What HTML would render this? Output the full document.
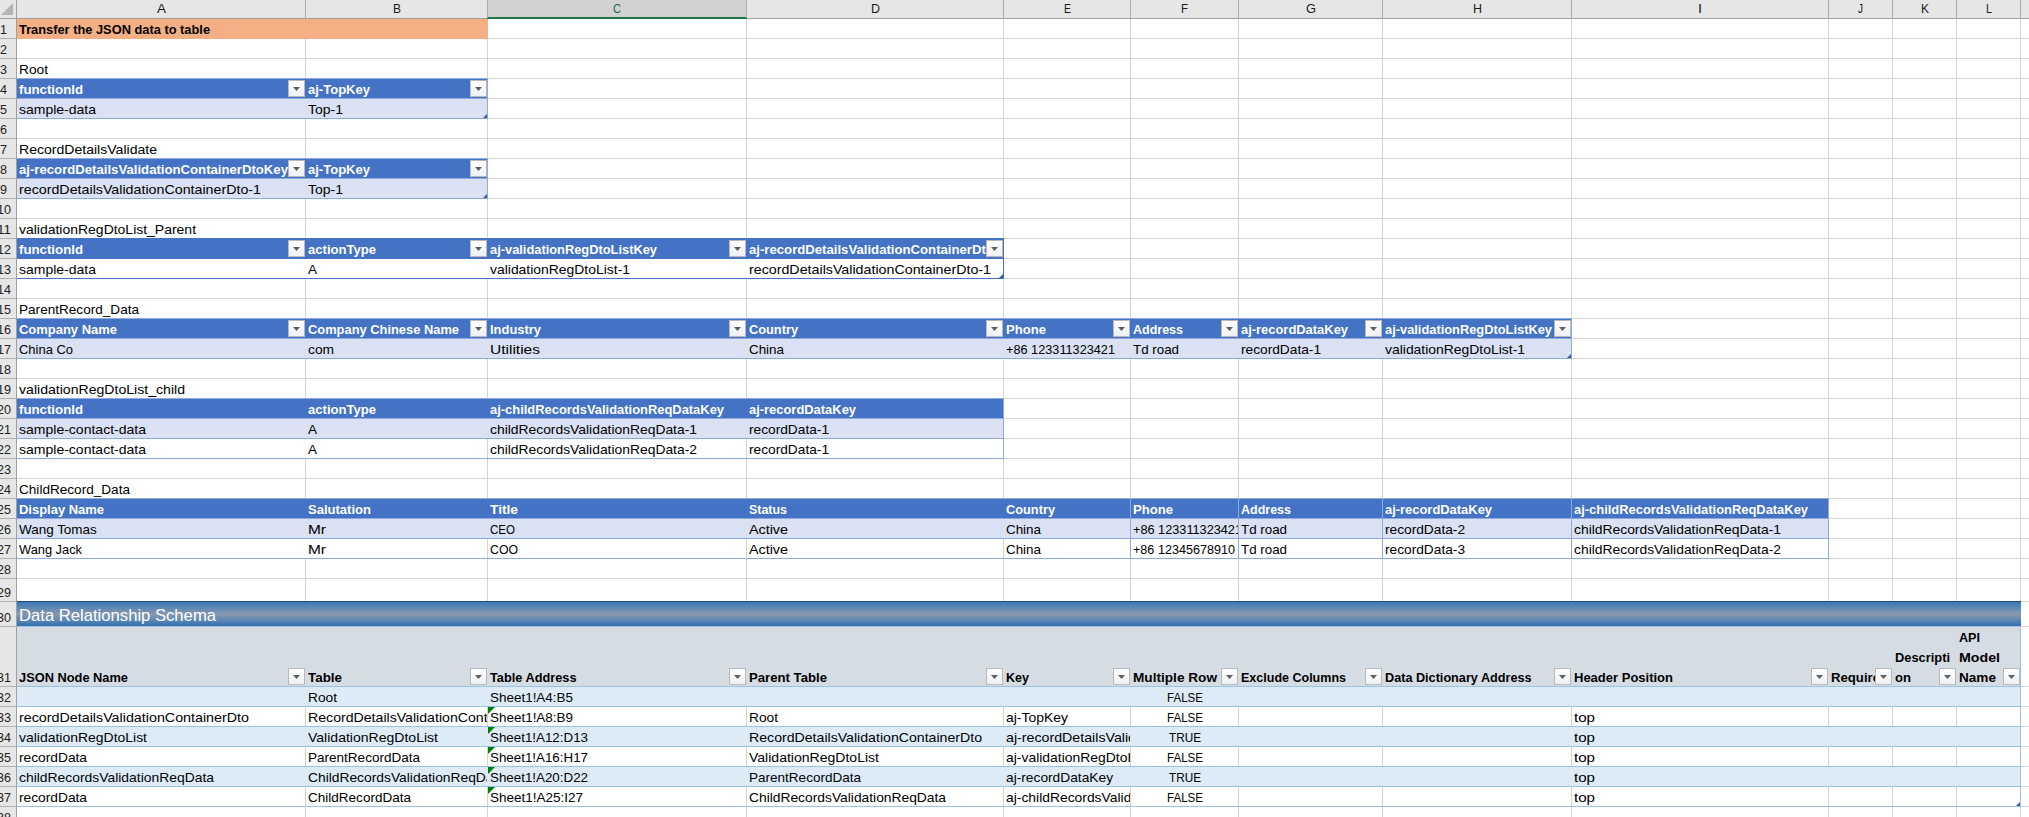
<!DOCTYPE html>
<html><head><meta charset="utf-8"><style>
html,body{margin:0;padding:0;background:#fff;}
#root{position:relative;width:2029px;height:817px;overflow:hidden;background:#fff;font-family:"Liberation Sans",sans-serif;}
#root div{position:absolute;}
.t{overflow:hidden;white-space:nowrap;}
.t span{position:absolute;top:0;transform-origin:0 0;white-space:nowrap;}
.btn{width:15px;height:15px;border:1px solid #b9b9b9;background:linear-gradient(#ffffff,#eef0f4);}
.btn i{position:absolute;left:4px;top:6px;width:0;height:0;border-left:3.5px solid transparent;border-right:3.5px solid transparent;border-top:4px solid #595959;}

</style></head><body><div id="root">
<div style="left:305px;top:19px;width:1px;height:798px;background:#d4d4d4;"></div>
<div style="left:487px;top:19px;width:1px;height:798px;background:#d4d4d4;"></div>
<div style="left:746px;top:19px;width:1px;height:798px;background:#d4d4d4;"></div>
<div style="left:1003px;top:19px;width:1px;height:798px;background:#d4d4d4;"></div>
<div style="left:1130px;top:19px;width:1px;height:798px;background:#d4d4d4;"></div>
<div style="left:1238px;top:19px;width:1px;height:798px;background:#d4d4d4;"></div>
<div style="left:1382px;top:19px;width:1px;height:798px;background:#d4d4d4;"></div>
<div style="left:1571px;top:19px;width:1px;height:798px;background:#d4d4d4;"></div>
<div style="left:1828px;top:19px;width:1px;height:798px;background:#d4d4d4;"></div>
<div style="left:1892px;top:19px;width:1px;height:798px;background:#d4d4d4;"></div>
<div style="left:1956px;top:19px;width:1px;height:798px;background:#d4d4d4;"></div>
<div style="left:2020px;top:19px;width:1px;height:798px;background:#d4d4d4;"></div>
<div style="left:17px;top:38px;width:2012px;height:1px;background:#d4d4d4;"></div>
<div style="left:17px;top:58px;width:2012px;height:1px;background:#d4d4d4;"></div>
<div style="left:17px;top:78px;width:2012px;height:1px;background:#d4d4d4;"></div>
<div style="left:17px;top:98px;width:2012px;height:1px;background:#d4d4d4;"></div>
<div style="left:17px;top:118px;width:2012px;height:1px;background:#d4d4d4;"></div>
<div style="left:17px;top:138px;width:2012px;height:1px;background:#d4d4d4;"></div>
<div style="left:17px;top:158px;width:2012px;height:1px;background:#d4d4d4;"></div>
<div style="left:17px;top:178px;width:2012px;height:1px;background:#d4d4d4;"></div>
<div style="left:17px;top:198px;width:2012px;height:1px;background:#d4d4d4;"></div>
<div style="left:17px;top:218px;width:2012px;height:1px;background:#d4d4d4;"></div>
<div style="left:17px;top:238px;width:2012px;height:1px;background:#d4d4d4;"></div>
<div style="left:17px;top:258px;width:2012px;height:1px;background:#d4d4d4;"></div>
<div style="left:17px;top:278px;width:2012px;height:1px;background:#d4d4d4;"></div>
<div style="left:17px;top:298px;width:2012px;height:1px;background:#d4d4d4;"></div>
<div style="left:17px;top:318px;width:2012px;height:1px;background:#d4d4d4;"></div>
<div style="left:17px;top:338px;width:2012px;height:1px;background:#d4d4d4;"></div>
<div style="left:17px;top:358px;width:2012px;height:1px;background:#d4d4d4;"></div>
<div style="left:17px;top:378px;width:2012px;height:1px;background:#d4d4d4;"></div>
<div style="left:17px;top:398px;width:2012px;height:1px;background:#d4d4d4;"></div>
<div style="left:17px;top:418px;width:2012px;height:1px;background:#d4d4d4;"></div>
<div style="left:17px;top:438px;width:2012px;height:1px;background:#d4d4d4;"></div>
<div style="left:17px;top:458px;width:2012px;height:1px;background:#d4d4d4;"></div>
<div style="left:17px;top:478px;width:2012px;height:1px;background:#d4d4d4;"></div>
<div style="left:17px;top:498px;width:2012px;height:1px;background:#d4d4d4;"></div>
<div style="left:17px;top:518px;width:2012px;height:1px;background:#d4d4d4;"></div>
<div style="left:17px;top:538px;width:2012px;height:1px;background:#d4d4d4;"></div>
<div style="left:17px;top:558px;width:2012px;height:1px;background:#d4d4d4;"></div>
<div style="left:17px;top:578px;width:2012px;height:1px;background:#d4d4d4;"></div>
<div style="left:17px;top:601px;width:2012px;height:1px;background:#d4d4d4;"></div>
<div style="left:17px;top:626px;width:2012px;height:1px;background:#d4d4d4;"></div>
<div style="left:17px;top:686px;width:2012px;height:1px;background:#d4d4d4;"></div>
<div style="left:17px;top:706px;width:2012px;height:1px;background:#d4d4d4;"></div>
<div style="left:17px;top:726px;width:2012px;height:1px;background:#d4d4d4;"></div>
<div style="left:17px;top:746px;width:2012px;height:1px;background:#d4d4d4;"></div>
<div style="left:17px;top:766px;width:2012px;height:1px;background:#d4d4d4;"></div>
<div style="left:17px;top:786px;width:2012px;height:1px;background:#d4d4d4;"></div>
<div style="left:17px;top:806px;width:2012px;height:1px;background:#d4d4d4;"></div>
<div style="left:17px;top:19px;width:471px;height:20px;background:#f4b084;"></div>
<div style="left:17px;top:79px;width:471px;height:20px;background:#4472c4;"></div>
<div style="left:17px;top:99px;width:471px;height:20px;background:#d9e1f2;"></div>
<div style="left:17px;top:78px;width:471px;height:1px;background:#8ea9db;"></div>
<div style="left:17px;top:98px;width:471px;height:1px;background:#8ea9db;"></div>
<div style="left:17px;top:118px;width:471px;height:1px;background:#8ea9db;"></div>
<div style="left:487px;top:78px;width:1px;height:41px;background:#8ea9db;"></div>
<div style="left:17px;top:159px;width:471px;height:20px;background:#4472c4;"></div>
<div style="left:17px;top:179px;width:471px;height:20px;background:#d9e1f2;"></div>
<div style="left:17px;top:158px;width:471px;height:1px;background:#8ea9db;"></div>
<div style="left:17px;top:178px;width:471px;height:1px;background:#8ea9db;"></div>
<div style="left:17px;top:198px;width:471px;height:1px;background:#8ea9db;"></div>
<div style="left:487px;top:158px;width:1px;height:41px;background:#8ea9db;"></div>
<div style="left:17px;top:239px;width:987px;height:20px;background:#4472c4;"></div>
<div style="left:17px;top:259px;width:987px;height:20px;background:#ffffff;"></div>
<div style="left:17px;top:238px;width:987px;height:1px;background:#4472c4;"></div>
<div style="left:17px;top:278px;width:987px;height:1px;background:#4472c4;"></div>
<div style="left:1003px;top:238px;width:1px;height:41px;background:#4472c4;"></div>
<div style="left:17px;top:319px;width:1555px;height:20px;background:#4472c4;"></div>
<div style="left:17px;top:339px;width:1555px;height:20px;background:#d9e1f2;"></div>
<div style="left:17px;top:318px;width:1555px;height:1px;background:#8ea9db;"></div>
<div style="left:17px;top:338px;width:1555px;height:1px;background:#8ea9db;"></div>
<div style="left:17px;top:358px;width:1555px;height:1px;background:#8ea9db;"></div>
<div style="left:1571px;top:318px;width:1px;height:41px;background:#8ea9db;"></div>
<div style="left:17px;top:399px;width:987px;height:20px;background:#4472c4;"></div>
<div style="left:17px;top:419px;width:987px;height:20px;background:#d9e1f2;"></div>
<div style="left:305px;top:439px;width:1px;height:19px;background:#ffffff;"></div>
<div style="left:17px;top:398px;width:987px;height:1px;background:#8ea9db;"></div>
<div style="left:17px;top:418px;width:987px;height:1px;background:#8ea9db;"></div>
<div style="left:17px;top:438px;width:987px;height:1px;background:#8ea9db;"></div>
<div style="left:17px;top:458px;width:987px;height:1px;background:#8ea9db;"></div>
<div style="left:1003px;top:398px;width:1px;height:61px;background:#8ea9db;"></div>
<div style="left:17px;top:499px;width:1812px;height:20px;background:#4472c4;"></div>
<div style="left:17px;top:519px;width:1812px;height:20px;background:#d9e1f2;"></div>
<div style="left:305px;top:539px;width:1px;height:19px;background:#ffffff;"></div>
<div style="left:17px;top:498px;width:1812px;height:1px;background:#8ea9db;"></div>
<div style="left:17px;top:518px;width:1812px;height:1px;background:#8ea9db;"></div>
<div style="left:17px;top:538px;width:1812px;height:1px;background:#8ea9db;"></div>
<div style="left:17px;top:558px;width:1812px;height:1px;background:#8ea9db;"></div>
<div style="left:1828px;top:498px;width:1px;height:61px;background:#8ea9db;"></div>
<div style="left:1130px;top:499px;width:1px;height:60px;background:#8ea9db;"></div>
<div style="left:1238px;top:499px;width:1px;height:60px;background:#8ea9db;"></div>
<div style="left:1382px;top:499px;width:1px;height:60px;background:#8ea9db;"></div>
<div style="left:1571px;top:499px;width:1px;height:60px;background:#8ea9db;"></div>
<div style="left:17px;top:601px;width:2004px;height:1px;background:#1f4e78;"></div>
<div style="left:17px;top:602px;width:2004px;height:24px;background:linear-gradient(#3a78b8,#5f88b4 25%,#8898ae 50%,#5f88b4 75%,#2e6fb2);"></div>
<div style="left:17px;top:626px;width:2004px;height:1px;background:#a9c4e0;"></div>
<div style="left:17px;top:627px;width:2004px;height:60px;background:#d6dce4;"></div>
<div style="left:17px;top:687px;width:2004px;height:20px;background:#ddebf7;"></div>
<div style="left:17px;top:727px;width:2004px;height:20px;background:#ddebf7;"></div>
<div style="left:17px;top:767px;width:2004px;height:20px;background:#ddebf7;"></div>
<div style="left:17px;top:686px;width:2004px;height:1px;background:#9bc2e6;"></div>
<div style="left:17px;top:706px;width:2004px;height:1px;background:#9bc2e6;"></div>
<div style="left:17px;top:726px;width:2004px;height:1px;background:#9bc2e6;"></div>
<div style="left:17px;top:746px;width:2004px;height:1px;background:#9bc2e6;"></div>
<div style="left:17px;top:766px;width:2004px;height:1px;background:#9bc2e6;"></div>
<div style="left:17px;top:786px;width:2004px;height:1px;background:#9bc2e6;"></div>
<div style="left:17px;top:806px;width:2004px;height:1px;background:#9bc2e6;"></div>
<div style="left:2020px;top:627px;width:1px;height:180px;background:#9bc2e6;"></div>
<div style="left:488px;top:707px;width:0;height:0;border-top:7px solid #008000;border-right:7px solid transparent"></div>
<div style="left:488px;top:727px;width:0;height:0;border-top:7px solid #008000;border-right:7px solid transparent"></div>
<div style="left:488px;top:747px;width:0;height:0;border-top:7px solid #008000;border-right:7px solid transparent"></div>
<div style="left:488px;top:767px;width:0;height:0;border-top:7px solid #008000;border-right:7px solid transparent"></div>
<div style="left:488px;top:787px;width:0;height:0;border-top:7px solid #008000;border-right:7px solid transparent"></div>
<div class="t" style="left:17px;top:21.50px;width:288px;height:16px;line-height:16px;"><span style="left:2.00px;font-size:13px;font-weight:bold;color:#000;transform:scaleX(0.9866)">Transfer the JSON data to table</span></div>
<div class="t" style="left:17px;top:61.50px;width:288px;height:16px;line-height:16px;"><span style="left:2.00px;font-size:13px;color:#000;transform:scaleX(1.0561)">Root</span></div>
<div class="t" style="left:17px;top:81.50px;width:271px;height:16px;line-height:16px;"><span style="left:2.00px;font-size:13px;font-weight:bold;color:#fff;transform:scaleX(1.0188)">functionId</span></div>
<div class="t" style="left:306px;top:81.50px;width:164px;height:16px;line-height:16px;"><span style="left:2.00px;font-size:13px;font-weight:bold;color:#fff;transform:scaleX(1.0020)">aj-TopKey</span></div>
<div class="t" style="left:17px;top:101.50px;width:288px;height:16px;line-height:16px;"><span style="left:2.00px;font-size:13px;color:#000;transform:scaleX(1.0763)">sample-data</span></div>
<div class="t" style="left:306px;top:101.50px;width:181px;height:16px;line-height:16px;"><span style="left:2.00px;font-size:13px;color:#000;transform:scaleX(1.0763)">Top-1</span></div>
<div class="t" style="left:17px;top:141.50px;width:288px;height:16px;line-height:16px;"><span style="left:2.00px;font-size:13px;color:#000;transform:scaleX(1.0810)">RecordDetailsValidate</span></div>
<div class="t" style="left:17px;top:161.50px;width:271px;height:16px;line-height:16px;"><span style="left:2.00px;font-size:13px;font-weight:bold;color:#fff;transform:scaleX(1.0119)">aj-recordDetailsValidationContainerDtoKey</span></div>
<div class="t" style="left:306px;top:161.50px;width:164px;height:16px;line-height:16px;"><span style="left:2.00px;font-size:13px;font-weight:bold;color:#fff;transform:scaleX(1.0020)">aj-TopKey</span></div>
<div class="t" style="left:17px;top:181.50px;width:288px;height:16px;line-height:16px;"><span style="left:2.00px;font-size:13px;color:#000;transform:scaleX(1.0957)">recordDetailsValidationContainerDto-1</span></div>
<div class="t" style="left:306px;top:181.50px;width:181px;height:16px;line-height:16px;"><span style="left:2.00px;font-size:13px;color:#000;transform:scaleX(1.0763)">Top-1</span></div>
<div class="t" style="left:17px;top:221.50px;width:288px;height:16px;line-height:16px;"><span style="left:2.00px;font-size:13px;color:#000;transform:scaleX(1.0743)">validationRegDtoList_Parent</span></div>
<div class="t" style="left:17px;top:241.50px;width:271px;height:16px;line-height:16px;"><span style="left:2.00px;font-size:13px;font-weight:bold;color:#fff;transform:scaleX(1.0188)">functionId</span></div>
<div class="t" style="left:306px;top:241.50px;width:164px;height:16px;line-height:16px;"><span style="left:2.00px;font-size:13px;font-weight:bold;color:#fff;transform:scaleX(1.0050)">actionType</span></div>
<div class="t" style="left:488px;top:241.50px;width:241px;height:16px;line-height:16px;"><span style="left:2.00px;font-size:13px;font-weight:bold;color:#fff;transform:scaleX(0.9880)">aj-validationRegDtoListKey</span></div>
<div class="t" style="left:747px;top:241.50px;width:239px;height:16px;line-height:16px;"><span style="left:2.00px;font-size:13px;font-weight:bold;color:#fff;transform:scaleX(1.0119)">aj-recordDetailsValidationContainerDtoKey</span></div>
<div class="t" style="left:17px;top:261.50px;width:288px;height:16px;line-height:16px;"><span style="left:2.00px;font-size:13px;color:#000;transform:scaleX(1.0763)">sample-data</span></div>
<div class="t" style="left:306px;top:261.50px;width:181px;height:16px;line-height:16px;"><span style="left:2.00px;font-size:13px;color:#000;transform:scaleX(1.0380)">A</span></div>
<div class="t" style="left:488px;top:261.50px;width:258px;height:16px;line-height:16px;"><span style="left:2.00px;font-size:13px;color:#000;transform:scaleX(1.0704)">validationRegDtoList-1</span></div>
<div class="t" style="left:747px;top:261.50px;width:256px;height:16px;line-height:16px;"><span style="left:2.00px;font-size:13px;color:#000;transform:scaleX(1.0957)">recordDetailsValidationContainerDto-1</span></div>
<div class="t" style="left:17px;top:301.50px;width:288px;height:16px;line-height:16px;"><span style="left:2.00px;font-size:13px;color:#000;transform:scaleX(1.0444)">ParentRecord_Data</span></div>
<div class="t" style="left:17px;top:321.50px;width:271px;height:16px;line-height:16px;"><span style="left:2.00px;font-size:13px;font-weight:bold;color:#fff;transform:scaleX(0.9975)">Company Name</span></div>
<div class="t" style="left:306px;top:321.50px;width:164px;height:16px;line-height:16px;"><span style="left:2.00px;font-size:13px;font-weight:bold;color:#fff;transform:scaleX(0.9906)">Company Chinese Name</span></div>
<div class="t" style="left:488px;top:321.50px;width:241px;height:16px;line-height:16px;"><span style="left:2.00px;font-size:13px;font-weight:bold;color:#fff;transform:scaleX(0.9945)">Industry</span></div>
<div class="t" style="left:747px;top:321.50px;width:239px;height:16px;line-height:16px;"><span style="left:2.00px;font-size:13px;font-weight:bold;color:#fff;transform:scaleX(0.9834)">Country</span></div>
<div class="t" style="left:1004px;top:321.50px;width:109px;height:16px;line-height:16px;"><span style="left:2.00px;font-size:13px;font-weight:bold;color:#fff;transform:scaleX(1.0070)">Phone</span></div>
<div class="t" style="left:1131px;top:321.50px;width:90px;height:16px;line-height:16px;"><span style="left:2.00px;font-size:13px;font-weight:bold;color:#fff;transform:scaleX(0.9612)">Address</span></div>
<div class="t" style="left:1239px;top:321.50px;width:126px;height:16px;line-height:16px;"><span style="left:2.00px;font-size:13px;font-weight:bold;color:#fff;transform:scaleX(0.9939)">aj-recordDataKey</span></div>
<div class="t" style="left:1383px;top:321.50px;width:171px;height:16px;line-height:16px;"><span style="left:2.00px;font-size:13px;font-weight:bold;color:#fff;transform:scaleX(0.9880)">aj-validationRegDtoListKey</span></div>
<div class="t" style="left:17px;top:341.50px;width:288px;height:16px;line-height:16px;"><span style="left:2.00px;font-size:13px;color:#000;transform:scaleX(0.9964)">China Co</span></div>
<div class="t" style="left:306px;top:341.50px;width:181px;height:16px;line-height:16px;"><span style="left:2.00px;font-size:13px;color:#000;transform:scaleX(1.0587)">com</span></div>
<div class="t" style="left:488px;top:341.50px;width:258px;height:16px;line-height:16px;"><span style="left:2.00px;font-size:13px;color:#000;transform:scaleX(1.1935)">Utilities</span></div>
<div class="t" style="left:747px;top:341.50px;width:256px;height:16px;line-height:16px;"><span style="left:2.00px;font-size:13px;color:#000;transform:scaleX(1.0304)">China</span></div>
<div class="t" style="left:1004px;top:341.50px;width:126px;height:16px;line-height:16px;"><span style="left:2.00px;font-size:13px;color:#000;transform:scaleX(0.9779)">+86 123311323421</span></div>
<div class="t" style="left:1131px;top:341.50px;width:107px;height:16px;line-height:16px;"><span style="left:2.00px;font-size:13px;color:#000;transform:scaleX(1.0267)">Td road</span></div>
<div class="t" style="left:1239px;top:341.50px;width:143px;height:16px;line-height:16px;"><span style="left:2.00px;font-size:13px;color:#000;transform:scaleX(1.0545)">recordData-1</span></div>
<div class="t" style="left:1383px;top:341.50px;width:188px;height:16px;line-height:16px;"><span style="left:2.00px;font-size:13px;color:#000;transform:scaleX(1.0704)">validationRegDtoList-1</span></div>
<div class="t" style="left:17px;top:381.50px;width:288px;height:16px;line-height:16px;"><span style="left:2.00px;font-size:13px;color:#000;transform:scaleX(1.0835)">validationRegDtoList_child</span></div>
<div class="t" style="left:17px;top:401.50px;width:288px;height:16px;line-height:16px;"><span style="left:2.00px;font-size:13px;font-weight:bold;color:#fff;transform:scaleX(1.0188)">functionId</span></div>
<div class="t" style="left:306px;top:401.50px;width:181px;height:16px;line-height:16px;"><span style="left:2.00px;font-size:13px;font-weight:bold;color:#fff;transform:scaleX(1.0050)">actionType</span></div>
<div class="t" style="left:488px;top:401.50px;width:258px;height:16px;line-height:16px;"><span style="left:2.00px;font-size:13px;font-weight:bold;color:#fff;transform:scaleX(0.9936)">aj-childRecordsValidationReqDataKey</span></div>
<div class="t" style="left:747px;top:401.50px;width:256px;height:16px;line-height:16px;"><span style="left:2.00px;font-size:13px;font-weight:bold;color:#fff;transform:scaleX(0.9939)">aj-recordDataKey</span></div>
<div class="t" style="left:17px;top:421.50px;width:288px;height:16px;line-height:16px;"><span style="left:2.00px;font-size:13px;color:#000;transform:scaleX(1.0783)">sample-contact-data</span></div>
<div class="t" style="left:306px;top:421.50px;width:181px;height:16px;line-height:16px;"><span style="left:2.00px;font-size:13px;color:#000;transform:scaleX(1.0380)">A</span></div>
<div class="t" style="left:488px;top:421.50px;width:258px;height:16px;line-height:16px;"><span style="left:2.00px;font-size:13px;color:#000;transform:scaleX(1.0662)">childRecordsValidationReqData-1</span></div>
<div class="t" style="left:747px;top:421.50px;width:256px;height:16px;line-height:16px;"><span style="left:2.00px;font-size:13px;color:#000;transform:scaleX(1.0545)">recordData-1</span></div>
<div class="t" style="left:17px;top:441.50px;width:288px;height:16px;line-height:16px;"><span style="left:2.00px;font-size:13px;color:#000;transform:scaleX(1.0783)">sample-contact-data</span></div>
<div class="t" style="left:306px;top:441.50px;width:181px;height:16px;line-height:16px;"><span style="left:2.00px;font-size:13px;color:#000;transform:scaleX(1.0380)">A</span></div>
<div class="t" style="left:488px;top:441.50px;width:258px;height:16px;line-height:16px;"><span style="left:2.00px;font-size:13px;color:#000;transform:scaleX(1.0662)">childRecordsValidationReqData-2</span></div>
<div class="t" style="left:747px;top:441.50px;width:256px;height:16px;line-height:16px;"><span style="left:2.00px;font-size:13px;color:#000;transform:scaleX(1.0545)">recordData-1</span></div>
<div class="t" style="left:17px;top:481.50px;width:288px;height:16px;line-height:16px;"><span style="left:2.00px;font-size:13px;color:#000;transform:scaleX(1.0450)">ChildRecord_Data</span></div>
<div class="t" style="left:17px;top:501.50px;width:288px;height:16px;line-height:16px;"><span style="left:2.00px;font-size:13px;font-weight:bold;color:#fff;transform:scaleX(0.9969)">Display Name</span></div>
<div class="t" style="left:306px;top:501.50px;width:181px;height:16px;line-height:16px;"><span style="left:2.00px;font-size:13px;font-weight:bold;color:#fff;transform:scaleX(1.0026)">Salutation</span></div>
<div class="t" style="left:488px;top:501.50px;width:258px;height:16px;line-height:16px;"><span style="left:2.00px;font-size:13px;font-weight:bold;color:#fff;transform:scaleX(1.0571)">Title</span></div>
<div class="t" style="left:747px;top:501.50px;width:256px;height:16px;line-height:16px;"><span style="left:2.00px;font-size:13px;font-weight:bold;color:#fff;transform:scaleX(0.9565)">Status</span></div>
<div class="t" style="left:1004px;top:501.50px;width:126px;height:16px;line-height:16px;"><span style="left:2.00px;font-size:13px;font-weight:bold;color:#fff;transform:scaleX(0.9834)">Country</span></div>
<div class="t" style="left:1131px;top:501.50px;width:107px;height:16px;line-height:16px;"><span style="left:2.00px;font-size:13px;font-weight:bold;color:#fff;transform:scaleX(1.0070)">Phone</span></div>
<div class="t" style="left:1239px;top:501.50px;width:143px;height:16px;line-height:16px;"><span style="left:2.00px;font-size:13px;font-weight:bold;color:#fff;transform:scaleX(0.9612)">Address</span></div>
<div class="t" style="left:1383px;top:501.50px;width:188px;height:16px;line-height:16px;"><span style="left:2.00px;font-size:13px;font-weight:bold;color:#fff;transform:scaleX(0.9939)">aj-recordDataKey</span></div>
<div class="t" style="left:1572px;top:501.50px;width:256px;height:16px;line-height:16px;"><span style="left:2.00px;font-size:13px;font-weight:bold;color:#fff;transform:scaleX(0.9936)">aj-childRecordsValidationReqDataKey</span></div>
<div class="t" style="left:17px;top:521.50px;width:288px;height:16px;line-height:16px;"><span style="left:2.00px;font-size:13px;color:#000;transform:scaleX(1.0348)">Wang Tomas</span></div>
<div class="t" style="left:306px;top:521.50px;width:181px;height:16px;line-height:16px;"><span style="left:2.00px;font-size:13px;color:#000;transform:scaleX(1.1875)">Mr</span></div>
<div class="t" style="left:488px;top:521.50px;width:258px;height:16px;line-height:16px;"><span style="left:2.00px;font-size:13px;color:#000;transform:scaleX(0.8874)">CEO</span></div>
<div class="t" style="left:747px;top:521.50px;width:256px;height:16px;line-height:16px;"><span style="left:2.00px;font-size:13px;color:#000;transform:scaleX(1.1017)">Active</span></div>
<div class="t" style="left:1004px;top:521.50px;width:126px;height:16px;line-height:16px;"><span style="left:2.00px;font-size:13px;color:#000;transform:scaleX(1.0304)">China</span></div>
<div class="t" style="left:1131px;top:521.50px;width:107px;height:16px;line-height:16px;"><span style="left:2.00px;font-size:13px;color:#000;transform:scaleX(0.9779)">+86 123311323421</span></div>
<div class="t" style="left:1239px;top:521.50px;width:143px;height:16px;line-height:16px;"><span style="left:2.00px;font-size:13px;color:#000;transform:scaleX(1.0267)">Td road</span></div>
<div class="t" style="left:1383px;top:521.50px;width:188px;height:16px;line-height:16px;"><span style="left:2.00px;font-size:13px;color:#000;transform:scaleX(1.0545)">recordData-2</span></div>
<div class="t" style="left:1572px;top:521.50px;width:256px;height:16px;line-height:16px;"><span style="left:2.00px;font-size:13px;color:#000;transform:scaleX(1.0662)">childRecordsValidationReqData-1</span></div>
<div class="t" style="left:17px;top:541.50px;width:288px;height:16px;line-height:16px;"><span style="left:2.00px;font-size:13px;color:#000;transform:scaleX(0.9872)">Wang Jack</span></div>
<div class="t" style="left:306px;top:541.50px;width:181px;height:16px;line-height:16px;"><span style="left:2.00px;font-size:13px;color:#000;transform:scaleX(1.1875)">Mr</span></div>
<div class="t" style="left:488px;top:541.50px;width:258px;height:16px;line-height:16px;"><span style="left:2.00px;font-size:13px;color:#000;transform:scaleX(0.9456)">COO</span></div>
<div class="t" style="left:747px;top:541.50px;width:256px;height:16px;line-height:16px;"><span style="left:2.00px;font-size:13px;color:#000;transform:scaleX(1.1017)">Active</span></div>
<div class="t" style="left:1004px;top:541.50px;width:126px;height:16px;line-height:16px;"><span style="left:2.00px;font-size:13px;color:#000;transform:scaleX(1.0304)">China</span></div>
<div class="t" style="left:1131px;top:541.50px;width:107px;height:16px;line-height:16px;"><span style="left:2.00px;font-size:13px;color:#000;transform:scaleX(0.9696)">+86 12345678910</span></div>
<div class="t" style="left:1239px;top:541.50px;width:143px;height:16px;line-height:16px;"><span style="left:2.00px;font-size:13px;color:#000;transform:scaleX(1.0267)">Td road</span></div>
<div class="t" style="left:1383px;top:541.50px;width:188px;height:16px;line-height:16px;"><span style="left:2.00px;font-size:13px;color:#000;transform:scaleX(1.0545)">recordData-3</span></div>
<div class="t" style="left:1572px;top:541.50px;width:256px;height:16px;line-height:16px;"><span style="left:2.00px;font-size:13px;color:#000;transform:scaleX(1.0662)">childRecordsValidationReqData-2</span></div>
<div class="t" style="left:17px;top:605.61px;width:288px;height:20px;line-height:20px;"><span style="left:2.00px;font-size:17px;color:#fff;transform:scaleX(0.9787)">Data Relationship Schema</span></div>
<div class="t" style="left:17px;top:669.50px;width:271px;height:16px;line-height:16px;"><span style="left:2.00px;font-size:13px;font-weight:bold;color:#000;transform:scaleX(0.9861)">JSON Node Name</span></div>
<div class="t" style="left:306px;top:669.50px;width:164px;height:16px;line-height:16px;"><span style="left:2.00px;font-size:13px;font-weight:bold;color:#000;transform:scaleX(1.0307)">Table</span></div>
<div class="t" style="left:488px;top:669.50px;width:241px;height:16px;line-height:16px;"><span style="left:2.00px;font-size:13px;font-weight:bold;color:#000;transform:scaleX(0.9817)">Table Address</span></div>
<div class="t" style="left:747px;top:669.50px;width:239px;height:16px;line-height:16px;"><span style="left:2.00px;font-size:13px;font-weight:bold;color:#000;transform:scaleX(1.0122)">Parent Table</span></div>
<div class="t" style="left:1004px;top:669.50px;width:109px;height:16px;line-height:16px;"><span style="left:2.00px;font-size:13px;font-weight:bold;color:#000;transform:scaleX(0.9644)">Key</span></div>
<div class="t" style="left:1131px;top:669.50px;width:90px;height:16px;line-height:16px;"><span style="left:2.00px;font-size:13px;font-weight:bold;color:#000;transform:scaleX(1.0479)">Multiple Row</span></div>
<div class="t" style="left:1239px;top:669.50px;width:126px;height:16px;line-height:16px;"><span style="left:2.00px;font-size:13px;font-weight:bold;color:#000;transform:scaleX(0.9626)">Exclude Columns</span></div>
<div class="t" style="left:1383px;top:669.50px;width:171px;height:16px;line-height:16px;"><span style="left:2.00px;font-size:13px;font-weight:bold;color:#000;transform:scaleX(0.9736)">Data Dictionary Address</span></div>
<div class="t" style="left:1572px;top:669.50px;width:239px;height:16px;line-height:16px;"><span style="left:2.00px;font-size:13px;font-weight:bold;color:#000;transform:scaleX(1.0003)">Header Position</span></div>
<div class="t" style="left:1829px;top:669.50px;width:46px;height:16px;line-height:16px;"><span style="left:2.00px;font-size:13px;font-weight:bold;color:#000;transform:scaleX(1.0117)">Required</span></div>
<div class="t" style="left:1893px;top:649.50px;width:62px;height:16px;line-height:16px;"><span style="left:2.00px;font-size:13px;font-weight:bold;color:#000;transform:scaleX(0.9887)">Descripti</span></div>
<div class="t" style="left:1893px;top:669.50px;width:46px;height:16px;line-height:16px;"><span style="left:2.00px;font-size:13px;font-weight:bold;color:#000;transform:scaleX(1.0074)">on</span></div>
<div class="t" style="left:1957px;top:629.50px;width:63px;height:16px;line-height:16px;"><span style="left:2.00px;font-size:13px;font-weight:bold;color:#000;transform:scaleX(0.9690)">API</span></div>
<div class="t" style="left:1957px;top:649.50px;width:63px;height:16px;line-height:16px;"><span style="left:2.00px;font-size:13px;font-weight:bold;color:#000;transform:scaleX(1.0918)">Model</span></div>
<div class="t" style="left:1957px;top:669.50px;width:46px;height:16px;line-height:16px;"><span style="left:2.00px;font-size:13px;font-weight:bold;color:#000;transform:scaleX(1.0450)">Name</span></div>
<div class="t" style="left:306px;top:689.50px;width:181px;height:16px;line-height:16px;"><span style="left:2.00px;font-size:13px;color:#000;transform:scaleX(1.0561)">Root</span></div>
<div class="t" style="left:488px;top:689.50px;width:258px;height:16px;line-height:16px;"><span style="left:2.00px;font-size:13px;color:#000;transform:scaleX(1.0346)">Sheet1!A4:B5</span></div>
<div class="t" style="left:1131px;top:689.50px;width:107px;height:16px;line-height:16px;"><span style="left:35.50px;font-size:13px;color:#000;transform:scaleX(0.8896)">FALSE</span></div>
<div class="t" style="left:17px;top:709.50px;width:288px;height:16px;line-height:16px;"><span style="left:2.00px;font-size:13px;color:#000;transform:scaleX(1.0988)">recordDetailsValidationContainerDto</span></div>
<div class="t" style="left:306px;top:709.50px;width:181px;height:16px;line-height:16px;"><span style="left:2.00px;font-size:13px;color:#000;transform:scaleX(1.0869)">RecordDetailsValidationContainerDto</span></div>
<div class="t" style="left:488px;top:709.50px;width:258px;height:16px;line-height:16px;"><span style="left:2.00px;font-size:13px;color:#000;transform:scaleX(1.0346)">Sheet1!A8:B9</span></div>
<div class="t" style="left:747px;top:709.50px;width:256px;height:16px;line-height:16px;"><span style="left:2.00px;font-size:13px;color:#000;transform:scaleX(1.0561)">Root</span></div>
<div class="t" style="left:1004px;top:709.50px;width:126px;height:16px;line-height:16px;"><span style="left:2.00px;font-size:13px;color:#000;transform:scaleX(1.0725)">aj-TopKey</span></div>
<div class="t" style="left:1131px;top:709.50px;width:107px;height:16px;line-height:16px;"><span style="left:35.50px;font-size:13px;color:#000;transform:scaleX(0.8896)">FALSE</span></div>
<div class="t" style="left:1572px;top:709.50px;width:256px;height:16px;line-height:16px;"><span style="left:2.00px;font-size:13px;color:#000;transform:scaleX(1.1620)">top</span></div>
<div class="t" style="left:17px;top:729.50px;width:288px;height:16px;line-height:16px;"><span style="left:2.00px;font-size:13px;color:#000;transform:scaleX(1.0735)">validationRegDtoList</span></div>
<div class="t" style="left:306px;top:729.50px;width:181px;height:16px;line-height:16px;"><span style="left:2.00px;font-size:13px;color:#000;transform:scaleX(1.0794)">ValidationRegDtoList</span></div>
<div class="t" style="left:488px;top:729.50px;width:258px;height:16px;line-height:16px;"><span style="left:2.00px;font-size:13px;color:#000;transform:scaleX(1.0272)">Sheet1!A12:D13</span></div>
<div class="t" style="left:747px;top:729.50px;width:256px;height:16px;line-height:16px;"><span style="left:2.00px;font-size:13px;color:#000;transform:scaleX(1.0869)">RecordDetailsValidationContainerDto</span></div>
<div class="t" style="left:1004px;top:729.50px;width:126px;height:16px;line-height:16px;"><span style="left:2.00px;font-size:13px;color:#000;transform:scaleX(1.0928)">aj-recordDetailsValidationContainerDtoKey</span></div>
<div class="t" style="left:1131px;top:729.50px;width:107px;height:16px;line-height:16px;"><span style="left:37.50px;font-size:13px;color:#000;transform:scaleX(0.9043)">TRUE</span></div>
<div class="t" style="left:1572px;top:729.50px;width:256px;height:16px;line-height:16px;"><span style="left:2.00px;font-size:13px;color:#000;transform:scaleX(1.1620)">top</span></div>
<div class="t" style="left:17px;top:749.50px;width:288px;height:16px;line-height:16px;"><span style="left:2.00px;font-size:13px;color:#000;transform:scaleX(1.0574)">recordData</span></div>
<div class="t" style="left:306px;top:749.50px;width:181px;height:16px;line-height:16px;"><span style="left:2.00px;font-size:13px;color:#000;transform:scaleX(1.0402)">ParentRecordData</span></div>
<div class="t" style="left:488px;top:749.50px;width:258px;height:16px;line-height:16px;"><span style="left:2.00px;font-size:13px;color:#000;transform:scaleX(1.0272)">Sheet1!A16:H17</span></div>
<div class="t" style="left:747px;top:749.50px;width:256px;height:16px;line-height:16px;"><span style="left:2.00px;font-size:13px;color:#000;transform:scaleX(1.0794)">ValidationRegDtoList</span></div>
<div class="t" style="left:1004px;top:749.50px;width:126px;height:16px;line-height:16px;"><span style="left:2.00px;font-size:13px;color:#000;transform:scaleX(1.0699)">aj-validationRegDtoListKey</span></div>
<div class="t" style="left:1131px;top:749.50px;width:107px;height:16px;line-height:16px;"><span style="left:35.50px;font-size:13px;color:#000;transform:scaleX(0.8896)">FALSE</span></div>
<div class="t" style="left:1572px;top:749.50px;width:256px;height:16px;line-height:16px;"><span style="left:2.00px;font-size:13px;color:#000;transform:scaleX(1.1620)">top</span></div>
<div class="t" style="left:17px;top:769.50px;width:288px;height:16px;line-height:16px;"><span style="left:2.00px;font-size:13px;color:#000;transform:scaleX(1.0680)">childRecordsValidationReqData</span></div>
<div class="t" style="left:306px;top:769.50px;width:181px;height:16px;line-height:16px;"><span style="left:2.00px;font-size:13px;color:#000;transform:scaleX(1.0622)">ChildRecordsValidationReqData</span></div>
<div class="t" style="left:488px;top:769.50px;width:258px;height:16px;line-height:16px;"><span style="left:2.00px;font-size:13px;color:#000;transform:scaleX(1.0272)">Sheet1!A20:D22</span></div>
<div class="t" style="left:747px;top:769.50px;width:256px;height:16px;line-height:16px;"><span style="left:2.00px;font-size:13px;color:#000;transform:scaleX(1.0402)">ParentRecordData</span></div>
<div class="t" style="left:1004px;top:769.50px;width:126px;height:16px;line-height:16px;"><span style="left:2.00px;font-size:13px;color:#000;transform:scaleX(1.0578)">aj-recordDataKey</span></div>
<div class="t" style="left:1131px;top:769.50px;width:107px;height:16px;line-height:16px;"><span style="left:37.50px;font-size:13px;color:#000;transform:scaleX(0.9043)">TRUE</span></div>
<div class="t" style="left:1572px;top:769.50px;width:256px;height:16px;line-height:16px;"><span style="left:2.00px;font-size:13px;color:#000;transform:scaleX(1.1620)">top</span></div>
<div class="t" style="left:17px;top:789.50px;width:288px;height:16px;line-height:16px;"><span style="left:2.00px;font-size:13px;color:#000;transform:scaleX(1.0574)">recordData</span></div>
<div class="t" style="left:306px;top:789.50px;width:181px;height:16px;line-height:16px;"><span style="left:2.00px;font-size:13px;color:#000;transform:scaleX(1.0405)">ChildRecordData</span></div>
<div class="t" style="left:488px;top:789.50px;width:258px;height:16px;line-height:16px;"><span style="left:2.00px;font-size:13px;color:#000;transform:scaleX(1.0376)">Sheet1!A25:I27</span></div>
<div class="t" style="left:747px;top:789.50px;width:256px;height:16px;line-height:16px;"><span style="left:2.00px;font-size:13px;color:#000;transform:scaleX(1.0622)">ChildRecordsValidationReqData</span></div>
<div class="t" style="left:1004px;top:789.50px;width:126px;height:16px;line-height:16px;"><span style="left:2.00px;font-size:13px;color:#000;transform:scaleX(1.0664)">aj-childRecordsValidationReqDataKey</span></div>
<div class="t" style="left:1131px;top:789.50px;width:107px;height:16px;line-height:16px;"><span style="left:35.50px;font-size:13px;color:#000;transform:scaleX(0.8896)">FALSE</span></div>
<div class="t" style="left:1572px;top:789.50px;width:256px;height:16px;line-height:16px;"><span style="left:2.00px;font-size:13px;color:#000;transform:scaleX(1.1620)">top</span></div>
<div class="btn" style="left:288px;top:80px"><svg width="7" height="4" style="position:absolute;left:4px;top:6px"><polygon points="0,0 7,0 3.5,4" fill="#5f5f5f"/></svg></div>
<div class="btn" style="left:470px;top:80px"><svg width="7" height="4" style="position:absolute;left:4px;top:6px"><polygon points="0,0 7,0 3.5,4" fill="#5f5f5f"/></svg></div>
<div class="btn" style="left:288px;top:160px"><svg width="7" height="4" style="position:absolute;left:4px;top:6px"><polygon points="0,0 7,0 3.5,4" fill="#5f5f5f"/></svg></div>
<div class="btn" style="left:470px;top:160px"><svg width="7" height="4" style="position:absolute;left:4px;top:6px"><polygon points="0,0 7,0 3.5,4" fill="#5f5f5f"/></svg></div>
<div class="btn" style="left:288px;top:240px"><svg width="7" height="4" style="position:absolute;left:4px;top:6px"><polygon points="0,0 7,0 3.5,4" fill="#5f5f5f"/></svg></div>
<div class="btn" style="left:470px;top:240px"><svg width="7" height="4" style="position:absolute;left:4px;top:6px"><polygon points="0,0 7,0 3.5,4" fill="#5f5f5f"/></svg></div>
<div class="btn" style="left:729px;top:240px"><svg width="7" height="4" style="position:absolute;left:4px;top:6px"><polygon points="0,0 7,0 3.5,4" fill="#5f5f5f"/></svg></div>
<div class="btn" style="left:986px;top:240px"><svg width="7" height="4" style="position:absolute;left:4px;top:6px"><polygon points="0,0 7,0 3.5,4" fill="#5f5f5f"/></svg></div>
<div class="btn" style="left:288px;top:320px"><svg width="7" height="4" style="position:absolute;left:4px;top:6px"><polygon points="0,0 7,0 3.5,4" fill="#5f5f5f"/></svg></div>
<div class="btn" style="left:470px;top:320px"><svg width="7" height="4" style="position:absolute;left:4px;top:6px"><polygon points="0,0 7,0 3.5,4" fill="#5f5f5f"/></svg></div>
<div class="btn" style="left:729px;top:320px"><svg width="7" height="4" style="position:absolute;left:4px;top:6px"><polygon points="0,0 7,0 3.5,4" fill="#5f5f5f"/></svg></div>
<div class="btn" style="left:986px;top:320px"><svg width="7" height="4" style="position:absolute;left:4px;top:6px"><polygon points="0,0 7,0 3.5,4" fill="#5f5f5f"/></svg></div>
<div class="btn" style="left:1113px;top:320px"><svg width="7" height="4" style="position:absolute;left:4px;top:6px"><polygon points="0,0 7,0 3.5,4" fill="#5f5f5f"/></svg></div>
<div class="btn" style="left:1221px;top:320px"><svg width="7" height="4" style="position:absolute;left:4px;top:6px"><polygon points="0,0 7,0 3.5,4" fill="#5f5f5f"/></svg></div>
<div class="btn" style="left:1365px;top:320px"><svg width="7" height="4" style="position:absolute;left:4px;top:6px"><polygon points="0,0 7,0 3.5,4" fill="#5f5f5f"/></svg></div>
<div class="btn" style="left:1554px;top:320px"><svg width="7" height="4" style="position:absolute;left:4px;top:6px"><polygon points="0,0 7,0 3.5,4" fill="#5f5f5f"/></svg></div>
<div class="btn" style="left:288px;top:668px"><svg width="7" height="4" style="position:absolute;left:4px;top:6px"><polygon points="0,0 7,0 3.5,4" fill="#5f5f5f"/></svg></div>
<div class="btn" style="left:470px;top:668px"><svg width="7" height="4" style="position:absolute;left:4px;top:6px"><polygon points="0,0 7,0 3.5,4" fill="#5f5f5f"/></svg></div>
<div class="btn" style="left:729px;top:668px"><svg width="7" height="4" style="position:absolute;left:4px;top:6px"><polygon points="0,0 7,0 3.5,4" fill="#5f5f5f"/></svg></div>
<div class="btn" style="left:986px;top:668px"><svg width="7" height="4" style="position:absolute;left:4px;top:6px"><polygon points="0,0 7,0 3.5,4" fill="#5f5f5f"/></svg></div>
<div class="btn" style="left:1113px;top:668px"><svg width="7" height="4" style="position:absolute;left:4px;top:6px"><polygon points="0,0 7,0 3.5,4" fill="#5f5f5f"/></svg></div>
<div class="btn" style="left:1221px;top:668px"><svg width="7" height="4" style="position:absolute;left:4px;top:6px"><polygon points="0,0 7,0 3.5,4" fill="#5f5f5f"/></svg></div>
<div class="btn" style="left:1365px;top:668px"><svg width="7" height="4" style="position:absolute;left:4px;top:6px"><polygon points="0,0 7,0 3.5,4" fill="#5f5f5f"/></svg></div>
<div class="btn" style="left:1554px;top:668px"><svg width="7" height="4" style="position:absolute;left:4px;top:6px"><polygon points="0,0 7,0 3.5,4" fill="#5f5f5f"/></svg></div>
<div class="btn" style="left:1811px;top:668px"><svg width="7" height="4" style="position:absolute;left:4px;top:6px"><polygon points="0,0 7,0 3.5,4" fill="#5f5f5f"/></svg></div>
<div class="btn" style="left:1875px;top:668px"><svg width="7" height="4" style="position:absolute;left:4px;top:6px"><polygon points="0,0 7,0 3.5,4" fill="#5f5f5f"/></svg></div>
<div class="btn" style="left:1939px;top:668px"><svg width="7" height="4" style="position:absolute;left:4px;top:6px"><polygon points="0,0 7,0 3.5,4" fill="#5f5f5f"/></svg></div>
<div class="btn" style="left:2003px;top:668px"><svg width="7" height="4" style="position:absolute;left:4px;top:6px"><polygon points="0,0 7,0 3.5,4" fill="#5f5f5f"/></svg></div>
<div style="left:483px;top:114px;width:0;height:0;border-bottom:4px solid #3a56a8;border-left:4px solid transparent"></div>
<div style="left:483px;top:194px;width:0;height:0;border-bottom:4px solid #3a56a8;border-left:4px solid transparent"></div>
<div style="left:999px;top:274px;width:0;height:0;border-bottom:4px solid #3a56a8;border-left:4px solid transparent"></div>
<div style="left:1567px;top:354px;width:0;height:0;border-bottom:4px solid #3a56a8;border-left:4px solid transparent"></div>
<div style="left:2016px;top:802px;width:0;height:0;border-bottom:4px solid #3a56a8;border-left:4px solid transparent"></div>
<div style="left:0;top:0;width:2029px;height:18px;background:#e6e6e6"></div>
<div style="left:488px;top:0;width:258px;height:17px;background:#d2d2d2"></div>
<div style="left:0;top:18px;width:2029px;height:1px;background:#a0a0a0"></div>
<div style="left:487px;top:17px;width:260px;height:2px;background:#217346"></div>
<div style="left:0;top:19px;width:16px;height:798px;background:#e6e6e6"></div>
<div style="left:16px;top:0;width:1px;height:817px;background:#a0a0a0"></div>
<div style="left:305px;top:0;width:1px;height:18px;background:#ababab"></div>
<div style="left:487px;top:0;width:1px;height:18px;background:#ababab"></div>
<div style="left:746px;top:0;width:1px;height:18px;background:#ababab"></div>
<div style="left:1003px;top:0;width:1px;height:18px;background:#ababab"></div>
<div style="left:1130px;top:0;width:1px;height:18px;background:#ababab"></div>
<div style="left:1238px;top:0;width:1px;height:18px;background:#ababab"></div>
<div style="left:1382px;top:0;width:1px;height:18px;background:#ababab"></div>
<div style="left:1571px;top:0;width:1px;height:18px;background:#ababab"></div>
<div style="left:1828px;top:0;width:1px;height:18px;background:#ababab"></div>
<div style="left:1892px;top:0;width:1px;height:18px;background:#ababab"></div>
<div style="left:1956px;top:0;width:1px;height:18px;background:#ababab"></div>
<div style="left:2020px;top:0;width:1px;height:18px;background:#ababab"></div>
<div style="left:0;top:38px;width:16px;height:1px;background:#b0b0b0"></div>
<div style="left:0;top:58px;width:16px;height:1px;background:#b0b0b0"></div>
<div style="left:0;top:78px;width:16px;height:1px;background:#b0b0b0"></div>
<div style="left:0;top:98px;width:16px;height:1px;background:#b0b0b0"></div>
<div style="left:0;top:118px;width:16px;height:1px;background:#b0b0b0"></div>
<div style="left:0;top:138px;width:16px;height:1px;background:#b0b0b0"></div>
<div style="left:0;top:158px;width:16px;height:1px;background:#b0b0b0"></div>
<div style="left:0;top:178px;width:16px;height:1px;background:#b0b0b0"></div>
<div style="left:0;top:198px;width:16px;height:1px;background:#b0b0b0"></div>
<div style="left:0;top:218px;width:16px;height:1px;background:#b0b0b0"></div>
<div style="left:0;top:238px;width:16px;height:1px;background:#b0b0b0"></div>
<div style="left:0;top:258px;width:16px;height:1px;background:#b0b0b0"></div>
<div style="left:0;top:278px;width:16px;height:1px;background:#b0b0b0"></div>
<div style="left:0;top:298px;width:16px;height:1px;background:#b0b0b0"></div>
<div style="left:0;top:318px;width:16px;height:1px;background:#b0b0b0"></div>
<div style="left:0;top:338px;width:16px;height:1px;background:#b0b0b0"></div>
<div style="left:0;top:358px;width:16px;height:1px;background:#b0b0b0"></div>
<div style="left:0;top:378px;width:16px;height:1px;background:#b0b0b0"></div>
<div style="left:0;top:398px;width:16px;height:1px;background:#b0b0b0"></div>
<div style="left:0;top:418px;width:16px;height:1px;background:#b0b0b0"></div>
<div style="left:0;top:438px;width:16px;height:1px;background:#b0b0b0"></div>
<div style="left:0;top:458px;width:16px;height:1px;background:#b0b0b0"></div>
<div style="left:0;top:478px;width:16px;height:1px;background:#b0b0b0"></div>
<div style="left:0;top:498px;width:16px;height:1px;background:#b0b0b0"></div>
<div style="left:0;top:518px;width:16px;height:1px;background:#b0b0b0"></div>
<div style="left:0;top:538px;width:16px;height:1px;background:#b0b0b0"></div>
<div style="left:0;top:558px;width:16px;height:1px;background:#b0b0b0"></div>
<div style="left:0;top:578px;width:16px;height:1px;background:#b0b0b0"></div>
<div style="left:0;top:601px;width:16px;height:1px;background:#b0b0b0"></div>
<div style="left:0;top:626px;width:16px;height:1px;background:#b0b0b0"></div>
<div style="left:0;top:686px;width:16px;height:1px;background:#b0b0b0"></div>
<div style="left:0;top:706px;width:16px;height:1px;background:#b0b0b0"></div>
<div style="left:0;top:726px;width:16px;height:1px;background:#b0b0b0"></div>
<div style="left:0;top:746px;width:16px;height:1px;background:#b0b0b0"></div>
<div style="left:0;top:766px;width:16px;height:1px;background:#b0b0b0"></div>
<div style="left:0;top:786px;width:16px;height:1px;background:#b0b0b0"></div>
<div style="left:0;top:806px;width:16px;height:1px;background:#b0b0b0"></div>
<div style="left:1px;top:3px;width:0;height:0;border-bottom:12px solid #b4b4b4;border-left:12px solid transparent"></div>
<div class="t" style="left:156.50px;top:0.50px;height:16px;line-height:16px;overflow:visible"><span style="font-size:13px;color:#1a1a1a;transform:scaleX(1.0380)">A</span></div>
<div class="t" style="left:392.50px;top:0.50px;height:16px;line-height:16px;overflow:visible"><span style="font-size:13px;color:#1a1a1a;transform:scaleX(0.9226)">B</span></div>
<div class="t" style="left:613.00px;top:0.50px;height:16px;line-height:16px;overflow:visible"><span style="font-size:13px;color:#1d6b3c;transform:scaleX(0.8521)">C</span></div>
<div class="t" style="left:870.50px;top:0.50px;height:16px;line-height:16px;overflow:visible"><span style="font-size:13px;color:#1a1a1a;transform:scaleX(0.9587)">D</span></div>
<div class="t" style="left:1063.50px;top:0.50px;height:16px;line-height:16px;overflow:visible"><span style="font-size:13px;color:#1a1a1a;transform:scaleX(0.8073)">E</span></div>
<div class="t" style="left:1181.00px;top:0.50px;height:16px;line-height:16px;overflow:visible"><span style="font-size:13px;color:#1a1a1a;transform:scaleX(0.8815)">F</span></div>
<div class="t" style="left:1305.50px;top:0.50px;height:16px;line-height:16px;overflow:visible"><span style="font-size:13px;color:#1a1a1a;transform:scaleX(0.9889)">G</span></div>
<div class="t" style="left:1472.50px;top:0.50px;height:16px;line-height:16px;overflow:visible"><span style="font-size:13px;color:#1a1a1a;transform:scaleX(0.9587)">H</span></div>
<div class="t" style="left:1698.00px;top:0.50px;height:16px;line-height:16px;overflow:visible"><span style="font-size:13px;color:#1a1a1a;transform:scaleX(1.1075)">I</span></div>
<div class="t" style="left:1858.00px;top:0.50px;height:16px;line-height:16px;overflow:visible"><span style="font-size:13px;color:#1a1a1a;transform:scaleX(0.7692)">J</span></div>
<div class="t" style="left:1920.50px;top:0.50px;height:16px;line-height:16px;overflow:visible"><span style="font-size:13px;color:#1a1a1a;transform:scaleX(0.9226)">K</span></div>
<div class="t" style="left:1985.50px;top:0.50px;height:16px;line-height:16px;overflow:visible"><span style="font-size:13px;color:#1a1a1a;transform:scaleX(0.8299)">L</span></div>
<div class="t" style="left:0.30px;top:21.50px;height:16px;line-height:16px;overflow:visible"><span style="font-size:13px;color:#222;transform:scaleX(0.9682)">1</span></div>
<div class="t" style="left:0.30px;top:41.50px;height:16px;line-height:16px;overflow:visible"><span style="font-size:13px;color:#222;transform:scaleX(0.9682)">2</span></div>
<div class="t" style="left:0.30px;top:61.50px;height:16px;line-height:16px;overflow:visible"><span style="font-size:13px;color:#222;transform:scaleX(0.9682)">3</span></div>
<div class="t" style="left:0.30px;top:81.50px;height:16px;line-height:16px;overflow:visible"><span style="font-size:13px;color:#222;transform:scaleX(0.9682)">4</span></div>
<div class="t" style="left:0.30px;top:101.50px;height:16px;line-height:16px;overflow:visible"><span style="font-size:13px;color:#222;transform:scaleX(0.9682)">5</span></div>
<div class="t" style="left:0.30px;top:121.50px;height:16px;line-height:16px;overflow:visible"><span style="font-size:13px;color:#222;transform:scaleX(0.9682)">6</span></div>
<div class="t" style="left:0.30px;top:141.50px;height:16px;line-height:16px;overflow:visible"><span style="font-size:13px;color:#222;transform:scaleX(0.9682)">7</span></div>
<div class="t" style="left:0.30px;top:161.50px;height:16px;line-height:16px;overflow:visible"><span style="font-size:13px;color:#222;transform:scaleX(0.9682)">8</span></div>
<div class="t" style="left:0.30px;top:181.50px;height:16px;line-height:16px;overflow:visible"><span style="font-size:13px;color:#222;transform:scaleX(0.9682)">9</span></div>
<div class="t" style="left:-3.20px;top:201.50px;height:16px;line-height:16px;overflow:visible"><span style="font-size:13px;color:#222;transform:scaleX(0.9682)">10</span></div>
<div class="t" style="left:-3.20px;top:221.50px;height:16px;line-height:16px;overflow:visible"><span style="font-size:13px;color:#222;transform:scaleX(1.0374)">11</span></div>
<div class="t" style="left:-3.20px;top:241.50px;height:16px;line-height:16px;overflow:visible"><span style="font-size:13px;color:#222;transform:scaleX(0.9682)">12</span></div>
<div class="t" style="left:-3.20px;top:261.50px;height:16px;line-height:16px;overflow:visible"><span style="font-size:13px;color:#222;transform:scaleX(0.9682)">13</span></div>
<div class="t" style="left:-3.20px;top:281.50px;height:16px;line-height:16px;overflow:visible"><span style="font-size:13px;color:#222;transform:scaleX(0.9682)">14</span></div>
<div class="t" style="left:-3.20px;top:301.50px;height:16px;line-height:16px;overflow:visible"><span style="font-size:13px;color:#222;transform:scaleX(0.9682)">15</span></div>
<div class="t" style="left:-3.20px;top:321.50px;height:16px;line-height:16px;overflow:visible"><span style="font-size:13px;color:#222;transform:scaleX(0.9682)">16</span></div>
<div class="t" style="left:-3.20px;top:341.50px;height:16px;line-height:16px;overflow:visible"><span style="font-size:13px;color:#222;transform:scaleX(0.9682)">17</span></div>
<div class="t" style="left:-3.20px;top:361.50px;height:16px;line-height:16px;overflow:visible"><span style="font-size:13px;color:#222;transform:scaleX(0.9682)">18</span></div>
<div class="t" style="left:-3.20px;top:381.50px;height:16px;line-height:16px;overflow:visible"><span style="font-size:13px;color:#222;transform:scaleX(0.9682)">19</span></div>
<div class="t" style="left:-3.20px;top:401.50px;height:16px;line-height:16px;overflow:visible"><span style="font-size:13px;color:#222;transform:scaleX(0.9682)">20</span></div>
<div class="t" style="left:-3.20px;top:421.50px;height:16px;line-height:16px;overflow:visible"><span style="font-size:13px;color:#222;transform:scaleX(0.9682)">21</span></div>
<div class="t" style="left:-3.20px;top:441.50px;height:16px;line-height:16px;overflow:visible"><span style="font-size:13px;color:#222;transform:scaleX(0.9682)">22</span></div>
<div class="t" style="left:-3.20px;top:461.50px;height:16px;line-height:16px;overflow:visible"><span style="font-size:13px;color:#222;transform:scaleX(0.9682)">23</span></div>
<div class="t" style="left:-3.20px;top:481.50px;height:16px;line-height:16px;overflow:visible"><span style="font-size:13px;color:#222;transform:scaleX(0.9682)">24</span></div>
<div class="t" style="left:-3.20px;top:501.50px;height:16px;line-height:16px;overflow:visible"><span style="font-size:13px;color:#222;transform:scaleX(0.9682)">25</span></div>
<div class="t" style="left:-3.20px;top:521.50px;height:16px;line-height:16px;overflow:visible"><span style="font-size:13px;color:#222;transform:scaleX(0.9682)">26</span></div>
<div class="t" style="left:-3.20px;top:541.50px;height:16px;line-height:16px;overflow:visible"><span style="font-size:13px;color:#222;transform:scaleX(0.9682)">27</span></div>
<div class="t" style="left:-3.20px;top:561.50px;height:16px;line-height:16px;overflow:visible"><span style="font-size:13px;color:#222;transform:scaleX(0.9682)">28</span></div>
<div class="t" style="left:-3.20px;top:584.50px;height:16px;line-height:16px;overflow:visible"><span style="font-size:13px;color:#222;transform:scaleX(0.9682)">29</span></div>
<div class="t" style="left:-3.20px;top:609.50px;height:16px;line-height:16px;overflow:visible"><span style="font-size:13px;color:#222;transform:scaleX(0.9682)">30</span></div>
<div class="t" style="left:-3.20px;top:669.50px;height:16px;line-height:16px;overflow:visible"><span style="font-size:13px;color:#222;transform:scaleX(0.9682)">31</span></div>
<div class="t" style="left:-3.20px;top:689.50px;height:16px;line-height:16px;overflow:visible"><span style="font-size:13px;color:#222;transform:scaleX(0.9682)">32</span></div>
<div class="t" style="left:-3.20px;top:709.50px;height:16px;line-height:16px;overflow:visible"><span style="font-size:13px;color:#222;transform:scaleX(0.9682)">33</span></div>
<div class="t" style="left:-3.20px;top:729.50px;height:16px;line-height:16px;overflow:visible"><span style="font-size:13px;color:#222;transform:scaleX(0.9682)">34</span></div>
<div class="t" style="left:-3.20px;top:749.50px;height:16px;line-height:16px;overflow:visible"><span style="font-size:13px;color:#222;transform:scaleX(0.9682)">35</span></div>
<div class="t" style="left:-3.20px;top:769.50px;height:16px;line-height:16px;overflow:visible"><span style="font-size:13px;color:#222;transform:scaleX(0.9682)">36</span></div>
<div class="t" style="left:-3.20px;top:789.50px;height:16px;line-height:16px;overflow:visible"><span style="font-size:13px;color:#222;transform:scaleX(0.9682)">37</span></div>
<div class="t" style="left:-3.20px;top:809.50px;height:16px;line-height:16px;overflow:visible"><span style="font-size:13px;color:#222;transform:scaleX(0.9682)">38</span></div>
</div></body></html>
